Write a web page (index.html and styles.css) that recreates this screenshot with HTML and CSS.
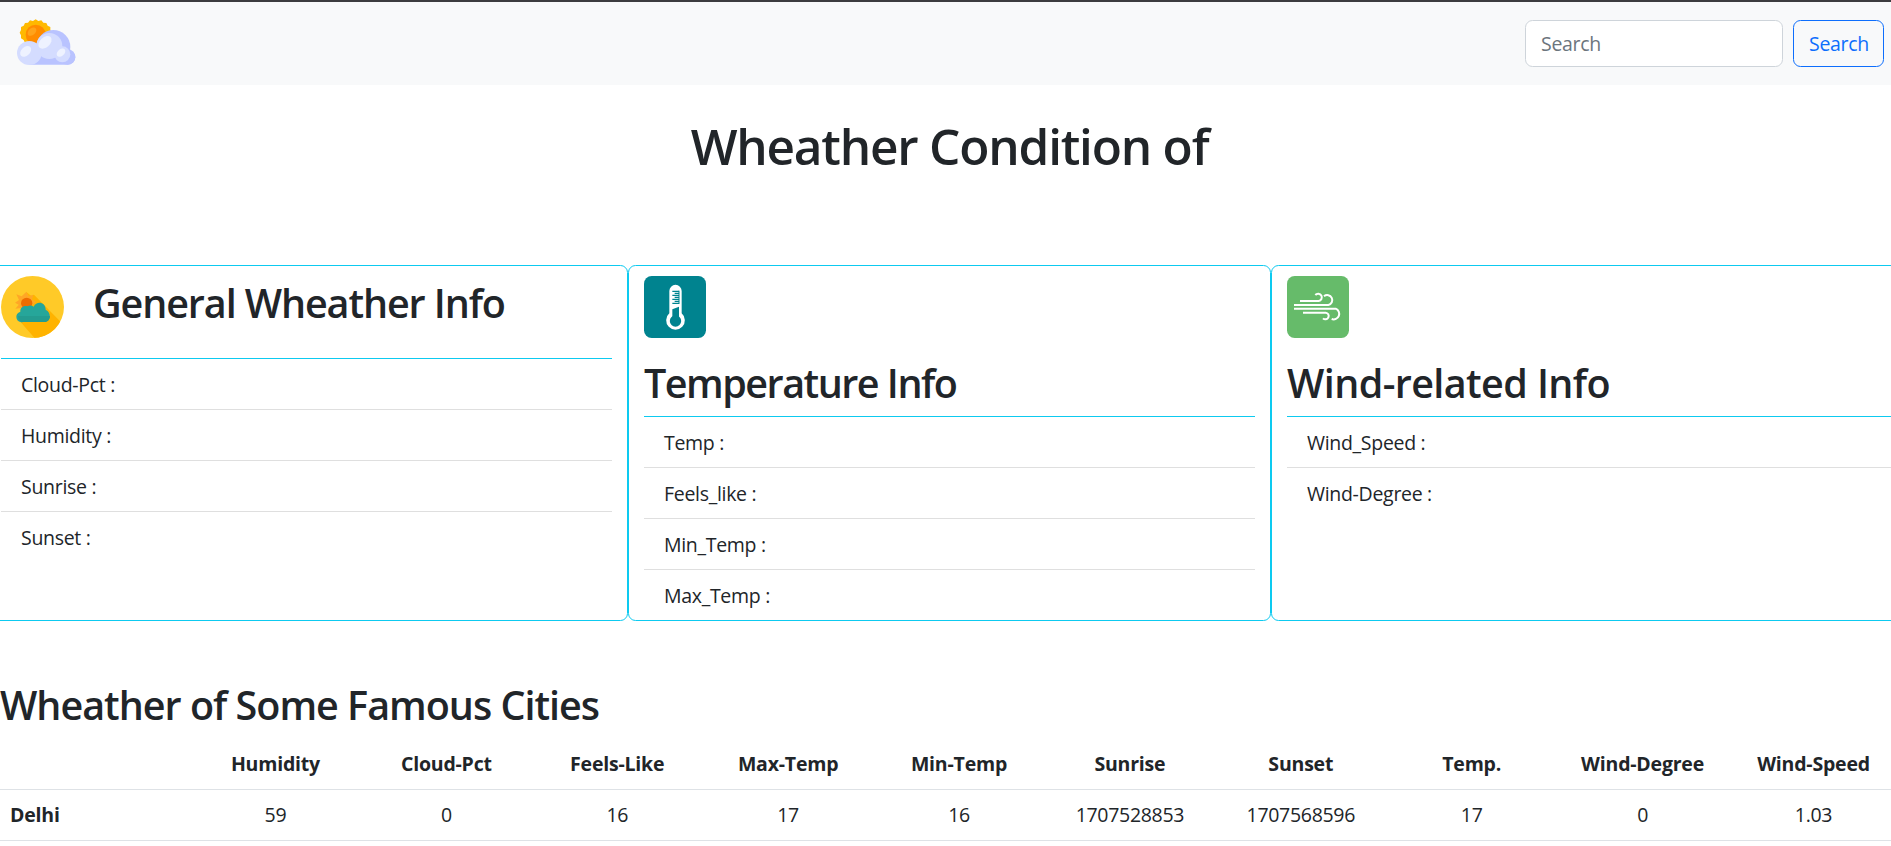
FILE: index.html
```html
<!DOCTYPE html>
<html lang="en">
<head>
<meta charset="utf-8">
<title>Wheather</title>
<link rel="stylesheet" href="styles.css">
</head>
<body>
<div class="page">
  <nav class="navbar">
    <svg class="logo" viewBox="48 57 180 141">
      <path fill="#ffb900" d="M107 58l8 5 9-2 6 7 9 1 4 8 8 4v9l4 8-4 8v9l-8 5-4 8-9 1-6 6-9-1-8 4-8-4-9 1-6-6-9-1-4-8-8-5v-9l-4-8 4-8v-9l8-4 4-8 9-1 6-7 9 2z"/>
      <circle cx="107" cy="104" r="30" fill="#ff8c00"/>
      <ellipse cx="96" cy="95" rx="15" ry="10" fill="#ffa31a" transform="rotate(-40 96 95)"/>
      <circle cx="160" cy="141" r="51" fill="#b9c3ff"/>
      <path fill="#b9c3ff" d="M88 150h115a23 22 0 0 1 0 44H88z"/>
      <circle cx="203" cy="171" r="23" fill="#b9c3ff"/>
      <circle cx="148" cy="138" r="39" fill="#d4dcff"/>
      <ellipse cx="88" cy="159" rx="37" ry="36" fill="#d4dcff"/>
      <circle cx="187" cy="163" r="24" fill="#d4dcff"/>
      <ellipse cx="135" cy="127" rx="23" ry="15" fill="#eef2ff" transform="rotate(-43 135 127)"/>
      <ellipse cx="77" cy="154" rx="19" ry="13" fill="#eef2ff" transform="rotate(-43 77 154)"/>
      <ellipse cx="183" cy="158" rx="15" ry="10" fill="#eef2ff" transform="rotate(-43 183 158)"/>
    </svg>
    <form class="search">
      <input class="search-input" type="text" placeholder="Search">
      <button class="search-button" type="button">Search</button>
    </form>
  </nav>

  <h1 class="title"><span>Wheather Condition of</span></h1>

  <div class="cards">
    <section class="card">
      <div class="inline-head">
        <svg class="icon" viewBox="3 48 189 186" preserveAspectRatio="none">
          <defs><clipPath id="disc"><ellipse cx="97.500" cy="141" rx="94.500" ry="93"/></clipPath></defs>
          <ellipse cx="97.500" cy="141" rx="94.500" ry="93" fill="#ffca28"/>
          <path clip-path="url(#disc)" fill="#ffb300" d="M79 96l15 12 8-4 98 100v50h-79l-60-69z"/>
          <path fill="#ffa726" d="M79 95l7 14 14-5-4 14 12 8-12 10-2 14-14 0-14 8-2-14-18 2 10-12-11-6 12-8-8-17 16 6z"/>
          <circle cx="80" cy="130" r="17" fill="#ef6c00"/>
          <path fill="#26a69a" d="M69 186a16 16 0 0 1-8-31c-1-13 11-20 21-16 8-4 14-2 19 1 10-19 36-13 36 9 18 8 16 36-3 37z"/>
          <path fill="#249c90" d="M54 168h96c0 10-7 18-16 18H69c-9 0-15-8-15-18z"/>
        </svg>
        <h2 class="heading general">General Wheather Info</h2>
      </div>
      <ul class="list">
        <li>Cloud-Pct :</li>
        <li>Humidity :</li>
        <li>Sunrise :</li>
        <li>Sunset :</li>
      </ul>
    </section>
    <section class="card">
      <svg class="icon" viewBox="72 63 186 186">
        <rect x="72" y="63" width="186" height="186" rx="23" fill="#00838f"/>
        <path fill="#fff" d="M148 108a18 18 0 0 1 37 0v67a28 28 0 1 1-37 0z"/>
        <circle cx="166.500" cy="198" r="17" fill="#00838f"/>
        <path fill="#00838f" d="M157 163l20-8v34h-20z"/>
        <path stroke="#00838f" stroke-width="3.500" d="M157 109h20M164 115h13M157 121h20M164 127h13M157 133h20M164 139h13M157 145h20"/>
        <path stroke="#00838f" stroke-width="3" d="M177 107v40"/>
      </svg>
      <h2 class="heading temperature">Temperature Info</h2>
      <ul class="list">
        <li>Temp :</li>
        <li>Feels_like :</li>
        <li>Min_Temp :</li>
        <li>Max_Temp :</li>
      </ul>
    </section>
    <section class="card">
      <svg class="icon" viewBox="81 63 186 186">
        <rect x="81" y="63" width="186" height="186" rx="23" fill="#66bb6a"/>
        <g fill="none" stroke="#fff" stroke-width="6">
          <path d="M120 138h56a11 11 0 1 0-10-18"/>
          <path d="M102 150h103a15 15 0 1 0-13-26"/>
          <path d="M102 161h125a16 16 0 1 1-12 31"/>
          <path d="M129 173h68a10 10 0 1 1-8 17"/>
        </g>
      </svg>
      <h2 class="heading wind">Wind-related Info</h2>
      <ul class="list">
        <li>Wind_Speed :</li>
        <li>Wind-Degree :</li>
      </ul>
    </section>
  </div>

  <h2 class="heading cities">Wheather of Some Famous Cities</h2>
  <table class="table">
    <thead>
      <tr><th class="city"></th><th>Humidity</th><th>Cloud-Pct</th><th>Feels-Like</th><th>Max-Temp</th><th>Min-Temp</th><th>Sunrise</th><th>Sunset</th><th>Temp.</th><th>Wind-Degree</th><th>Wind-Speed</th></tr>
    </thead>
    <tbody>
      <tr><th class="city">Delhi</th><td>59</td><td>0</td><td>16</td><td>17</td><td>16</td><td>1707528853</td><td>1707568596</td><td>17</td><td>0</td><td>1.03</td></tr>
    </tbody>
  </table>
</div>
</body>
</html>
```
FILE: styles.css
```css
* { box-sizing: border-box; }

html { overflow: hidden; }

body {
  margin: 0;
  overflow: hidden;
  background: #fff;
  color: #212529;
  font: 400 19.5px/30px "Segoe UI", "Open Sans", "Noto Sans", sans-serif;
  letter-spacing: -0.3px;
}

/* The page is slightly wider than the window, so the right edge is clipped. */
.page { width: 1899px; border-top: 2px solid #3c3c3f; }

.navbar {
  display: flex;
  justify-content: space-between;
  align-items: flex-start;
  height: 83px;
  padding: 17px 15px 0 16px;
  background: #f8f9fa;
}

.logo { width: 60px; height: 47px; }

.search { display: flex; gap: 10px; margin-top: 1px; }

.search-input,
.search-button {
  height: 47px;
  padding: 0 15px;
  border: 1px solid #ced4da;
  border-radius: 7.5px;
  font: inherit;
  letter-spacing: inherit;
}

.search-input { width: 258px; background: #fff; }
.search-input::placeholder { color: #6c757d; opacity: 1; }

.search-button {
  width: 91px;
  border-color: #0d6efd;
  background: transparent;
  color: #0d6efd;
}

.title {
  margin: 31px 0 89px;
  font-size: 49.5px;
  font-weight: 600;
  line-height: 60px;
  letter-spacing: -1.2px;
  text-align: center;
}

.cards { display: flex; width: 1929px; margin-left: -15px; }

.card {
  width: 643px;
  height: 356px;
  padding: 10px 15px 0;
  border: 1px solid #0dcaf0;
  border-radius: 7.5px;
}

.icon { display: block; flex: none; width: 62px; height: 62px; }

.inline-head { display: flex; gap: 29px; height: 82px; }
.inline-head .icon { width: 63px; }

.heading {
  margin: 21px 0 9px;
  font-size: 39.5px;
  font-weight: 600;
  line-height: 48px;
  letter-spacing: -1px;
}

.general { margin: 3px 0 0; letter-spacing: -1.1px; }
.temperature { letter-spacing: -1.5px; }
.wind { letter-spacing: -0.6px; }

.list {
  margin: 0;
  padding: 0;
  border-top: 1px solid #0dcaf0;
  list-style: none;
}

.list li { height: 51px; padding: 11px 20px 9px; border-bottom: 1px solid #dfdfdf; }
.list li:last-child { height: 50px; border-bottom: 0; }

.cities { margin: 60px 0 10px; }

.table {
  width: 1899px;
  border-collapse: separate;
  border-spacing: 0;
  table-layout: fixed;
  text-align: center;
}

.table th,
.table td { height: 51px; padding: 10px 0; border-bottom: 1px solid #dee2e6; white-space: nowrap; }

.table th { font-weight: 700; letter-spacing: -0.2px; }
.table .city { width: 190px; padding-left: 10px; text-align: left; }
```
